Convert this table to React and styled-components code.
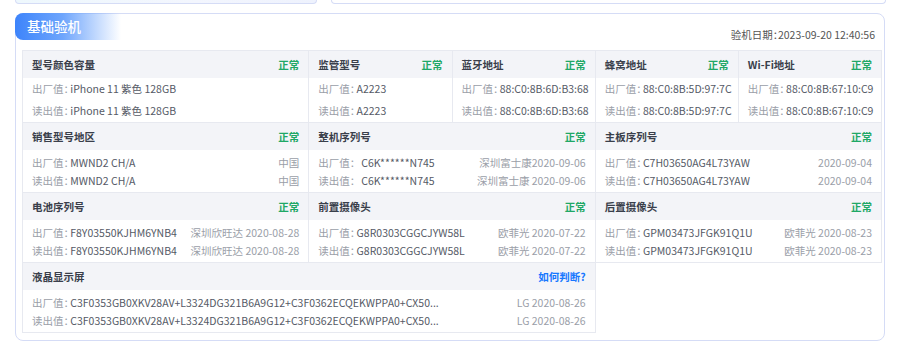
import React from 'react';
import styled, { createGlobalStyle } from 'styled-components';

const GlobalStyle = createGlobalStyle`
  body {
    margin: 0;
    background: #fff;
    font-family: "Noto Sans CJK SC", "Noto Sans", sans-serif;
    font-feature-settings: "halt";
  }
`;

const checks = [
  { title: '型号颜色容量', span: 2, status: '正常', value: 'iPhone 11 紫色 128GB' },
  { title: '监管型号', span: 1, status: '正常', value: 'A2223' },
  { title: '蓝牙地址', span: 1, status: '正常', value: '88:C0:8B:6D:B3:68' },
  { title: '蜂窝地址', span: 1, status: '正常', value: '88:C0:8B:5D:97:7C' },
  { title: 'Wi-Fi地址', span: 1, status: '正常', value: '88:C0:8B:67:10:C9' },
  { title: '销售型号地区', span: 2, status: '正常', value: 'MWND2 CH/A', extra: '中国' },
  { title: '整机序列号', span: 2, status: '正常', value: '\u00a0 C6K******N745', extra: '深圳富士康2020-09-06', extra2: '深圳富士康 2020-09-06' },
  { title: '主板序列号', span: 2, status: '正常', value: 'C7H03650AG4L73YAW', extra: '2020-09-04' },
  { title: '电池序列号', span: 2, status: '正常', value: 'F8Y03550KJHM6YNB4', extra: '深圳欣旺达 2020-08-28' },
  { title: '前置摄像头', span: 2, status: '正常', value: 'G8R0303CGGCJYW58L', extra: '欧菲光 2020-07-22' },
  { title: '后置摄像头', span: 2, status: '正常', value: 'GPM03473JFGK91Q1U', extra: '欧菲光 2020-08-23' },
  { title: '液晶显示屏', span: 4, link: '如何判断?', value: 'C3F0353GB0XKV28AV+L3324DG321B6A9G12+C3F0362ECQEKWPPA0+CX50...', extra: 'LG 2020-08-26' },
];

const App = () => {
  return (
    <Page>
      <GlobalStyle />
      <TopRow>
        <TopCard $tint />
        <TopCard />
      </TopRow>
      <Card>
        <CardHead>
          <Badge>基础验机</Badge>
          <DateText>验机日期：2023-09-20 12:40:56</DateText>
        </CardHead>
        <Grid>
          {checks.map((c, i) => (
            <Cell key={c.title} $span={c.span}>
              <CellHead>
                <CellTitle>{c.title}</CellTitle>
                {c.status && <Status>{c.status}</Status>}
                {c.link && <HelpLink>{c.link}</HelpLink>}
              </CellHead>
              <CellBody $tall={i < 5}>
                <Line>
                  <span>出厂值：<Value>{c.value}</Value></span>
                  {c.extra && <Extra>{c.extra}</Extra>}
                </Line>
                <Line>
                  <span>读出值：<Value>{c.value}</Value></span>
                  {c.extra && <Extra>{c.extra2 || c.extra}</Extra>}
                </Line>
              </CellBody>
            </Cell>
          ))}
        </Grid>
      </Card>
    </Page>
  );
};

const Page = styled.div`
  padding: 0 15px 0 15px;
`;

const TopRow = styled.div`
  display: flex;
  gap: 14px;
  height: 4px;
  margin-bottom: 9px;
`;

const TopCard = styled.div`
  flex: ${(p) => (p.$tint ? '0 0 300px' : '1')};
  margin-right: ${(p) => (p.$tint ? '0' : '-1px')};
  border: 1px solid #d5dcf6;
  border-top: none;
  border-radius: 0 0 8px 8px;
  background: ${(p) => (p.$tint ? 'linear-gradient(90deg, #eef8fd, #f3f6fe 60%, #eef2fd)' : '#fff')};
`;

const Card = styled.div`
  border: 1px solid #d5dcf6;
  border-radius: 8px;
  padding: 0 4px 7px 6px;
  height: 328px;
  box-sizing: border-box;
`;

const CardHead = styled.div`
  display: flex;
  justify-content: space-between;
  height: 36px;
`;

const Badge = styled.div`
  margin: -1px 0 0 -7px;
  height: 27px;
  width: 94px;
  padding-left: 12px;
  border-radius: 8px 0 0 8px;
  background: linear-gradient(90deg, #3d84fb 0%, #6ea5fc 45%, rgba(255, 255, 255, 0) 100%);
  color: #fff;
  font-size: 13.5px;
  font-weight: 500;
  line-height: 27px;
`;

const DateText = styled.div`
  margin-top: 13px;
  padding-right: 5px;
  font-size: 10.5px;
  line-height: 16px;
  color: #555;
`;

const Grid = styled.div`
  display: grid;
  grid-template-columns: repeat(6, 1fr);
  border-top: 1px solid #e7e9f0;
  border-left: 1px solid #e7e9f0;
  width: 859px;
`;

const Cell = styled.div`
  grid-column: span ${(p) => p.$span};
  border-right: 1px solid #e7e9f0;
  border-bottom: 1px solid #e7e9f0;
  min-width: 0;
`;

const CellHead = styled.div`
  display: flex;
  justify-content: space-between;
  align-items: center;
  height: 27px;
  padding: 0 9px;
  background: #f3f4f8;
  font-size: 10.5px;
  font-weight: 700;
`;

const CellTitle = styled.span`
  color: #3a3f4b;
`;

const Status = styled.span`
  color: #1fa866;
`;

const HelpLink = styled.span`
  color: #1677ff;
  cursor: pointer;
`;

const CellBody = styled.div`
  padding: ${(p) => (p.$tall ? '0 9px' : '4px 9px 2px')};
  font-size: 10.5px;
  line-height: ${(p) => (p.$tall ? '22px' : '18px')};
  color: #9a9ea8;
`;

const Line = styled.div`
  display: flex;
  justify-content: space-between;
  white-space: nowrap;
`;

const Value = styled.span`
  margin-left: 1.5px;
  color: #555a66;
`;

const Extra = styled.span`
  color: #9a9ea8;
`;

export default App;
